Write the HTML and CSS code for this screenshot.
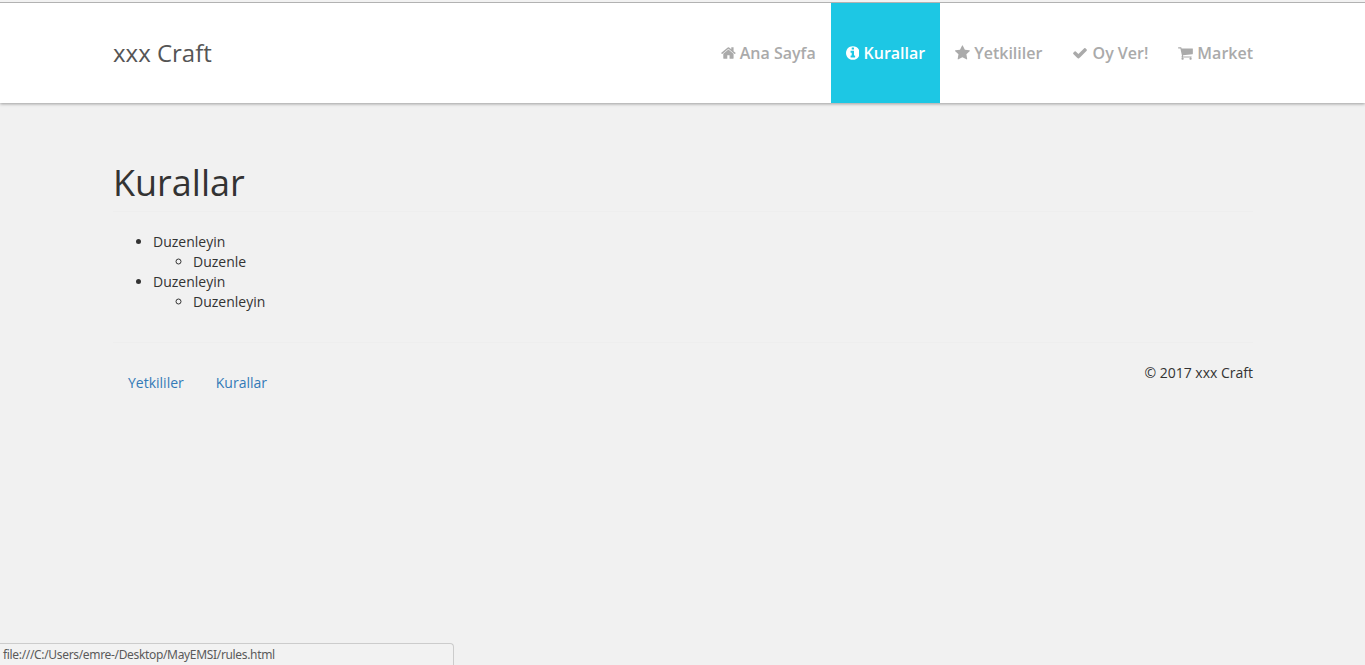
FILE: index.html
```
<!DOCTYPE html>
<html lang="tr">
<head>
<meta charset="utf-8">
<title>xxx Craft</title>
<link rel="stylesheet" href="styles.css">
</head>
<body>
<header class="navbar">
  <div class="container navbar-inner">
    <a class="brand">xxx Craft</a>
    <nav class="menu">
      <a class="menu-link"><svg class="icon" viewBox="64 0 1664 1792"><path d="M1472 992v480q0 26-19 45t-45 19h-384v-384h-256v384h-384q-26 0-45-19t-19-45v-480q0-1 .5-3t.5-3l575-474 575 474q1 2 1 6zm223-69l-62 74q-8 9-21 11h-3q-13 0-21-7l-692-577-692 577q-12 8-24 7-13-2-21-11l-62-74q-8-10-7-23.500t11-21.500l719-599q32-26 76-26t76 26l244 204v-195q0-14 9-23t23-9h192q14 0 23 9t9 23v408l219 182q10 8 11 21.500t-7 23.500z"/></svg> Ana Sayfa</a>
      <a class="menu-link active"><svg class="icon icon-narrow" viewBox="128 0 1536 1792"><path d="M1152 1376v-160q0-14-9-23t-23-9h-96v-512q0-14-9-23t-23-9h-320q-14 0-23 9t-9 23v160q0 14 9 23t23 9h96v320h-96q-14 0-23 9t-9 23v160q0 14 9 23t23 9h448q14 0 23-9t9-23zm-128-896v-160q0-14-9-23t-23-9h-192q-14 0-23 9t-9 23v160q0 14 9 23t23 9h192q14 0 23-9t9-23zm640 416q0 209-103 385.500t-279.500 279.500-385.500 103-385.500-103-279.500-279.500-103-385.500 103-385.500 279.500-279.500 385.500-103 385.500 103 279.500 279.500 103 385.500z"/></svg> Kurallar</a>
      <a class="menu-link"><svg class="icon" viewBox="64 0 1664 1792"><path d="M1728 647q0 22-26 48l-363 354 86 500q1 7 1 20 0 21-10.500 35.500t-30.500 14.500q-19 0-40-12l-449-236-449 236q-22 12-40 12-21 0-31.500-14.500t-10.500-35.500q0-6 2-20l86-500-364-354q-25-27-25-48 0-37 56-46l502-73 225-455q19-41 49-41t49 41l225 455 502 73q56 9 56 46z"/></svg> Yetkililer</a>
      <a class="menu-link"><svg class="icon icon-wide" viewBox="0 0 1792 1792"><path d="M1671 566q0 40-28 68l-724 724-136 136q-28 28-68 28t-68-28l-136-136-362-362q-28-28-28-68t28-68l136-136q28-28 68-28t68 28l294 295 656-657q28-28 68-28t68 28l136 136q28 28 28 68z"/></svg> Oy Ver!</a>
      <a class="menu-link"><svg class="icon" viewBox="64 0 1664 1792"><path d="M704 1536q0 52-38 90t-90 38-90-38-38-90 38-90 90-38 90 38 38 90zm896 0q0 52-38 90t-90 38-90-38-38-90 38-90 90-38 90 38 38 90zm128-1088v512q0 24-16.500 42.500t-40.500 21.500l-1044 122q13 60 13 70 0 16-24 64h920q26 0 45 19t19 45-19 45-45 19h-1024q-26 0-45-19t-19-45q0-11 8-31.500t16-36 21.500-40 15.500-29.500l-177-823h-204q-26 0-45-19t-19-45 19-45 45-19h256q16 0 28.500 6.500t19.500 15.500 13 24.500 8 26 5.500 29.500 4.500 26h1201q26 0 45 19t19 45z"/></svg> Market</a>
    </nav>
  </div>
</header>
<main class="container">
  <h1 class="page-title">Kurallar</h1>
  <ul class="rules">
    <li>Duzenleyin
      <ul class="subrules"><li>Duzenle</li></ul>
    </li>
    <li>Duzenleyin
      <ul class="subrules"><li>Duzenleyin</li></ul>
    </li>
  </ul>
</main>
<footer class="container">
  <div class="footer-row">
    <nav class="footer-links">
      <a class="footer-link">Yetkililer</a>
      <a class="footer-link">Kurallar</a>
    </nav>
    <p class="copyright">© 2017 xxx Craft</p>
  </div>
</footer>
<div class="status-bar">file:///C:/Users/emre-/Desktop/MayEMSI/rules.html</div>
</body>
</html>
```
FILE: styles.css
```
* {
  box-sizing: border-box;
}

body {
  margin: 0;
  min-height: 665px;
  overflow: hidden;
  border-top: 2px solid #f2f2f2;
  background: #f1f1f1;
  color: #333;
  font: 14px/20px "Open Sans", sans-serif;
}

.container {
  width: 1170px;
  margin: 0 auto;
  padding: 0 14.5px 0 15.5px;
}

.navbar {
  height: 101px;
  border-top: 1px solid #b2b2b2;
  background: #fff;
  box-shadow: 0 1px 3px rgba(0, 0, 0, 0.35);
}

.navbar-inner {
  display: flex;
  justify-content: space-between;
}

.brand {
  color: #555;
  font-size: 24px;
  line-height: 100px;
}

.menu {
  display: flex;
  margin-right: -15px;
}

.menu-link {
  padding: 0 15px;
  color: #aaa;
  font-size: 16px;
  font-weight: 600;
  line-height: 100px;
  white-space: nowrap;
}

.menu-link.active {
  background: #1dc7e4;
  color: #fff;
}

.icon {
  width: 14.86px;
  height: 16px;
  fill: currentColor;
  vertical-align: -2px;
}

.icon-narrow {
  width: 13.71px;
}

.icon-wide {
  width: 16px;
}

.page-title {
  margin: 60px 0 20px;
  padding-bottom: 9px;
  border-bottom: 1px solid #eee;
  font-size: 36px;
  font-weight: 400;
  line-height: 39px;
}

.rules,
.subrules {
  margin: 0;
  padding-left: 40px;
}

.rules {
  list-style: disc;
}

.subrules {
  list-style: circle;
}

.footer-row {
  display: flex;
  justify-content: space-between;
  margin-top: 30px;
  padding-top: 20px;
  border-top: 1px solid #eee;
}

.footer-links {
  display: flex;
  gap: 2px;
  padding-top: 10px;
}

.footer-link {
  padding: 0 15px;
  color: #337ab7;
}

.copyright {
  margin: 0;
}

.status-bar {
  position: fixed;
  bottom: 0;
  left: 0;
  width: 454px;
  height: 22px;
  padding-left: 3px;
  border: solid #ccc;
  border-width: 1px 1px 0 0;
  border-top-right-radius: 4px;
  background: #f2f2f2;
  color: #5a5a5a;
  font: 12px/22px "Noto Sans", sans-serif;
  letter-spacing: -0.33px;
}
```
